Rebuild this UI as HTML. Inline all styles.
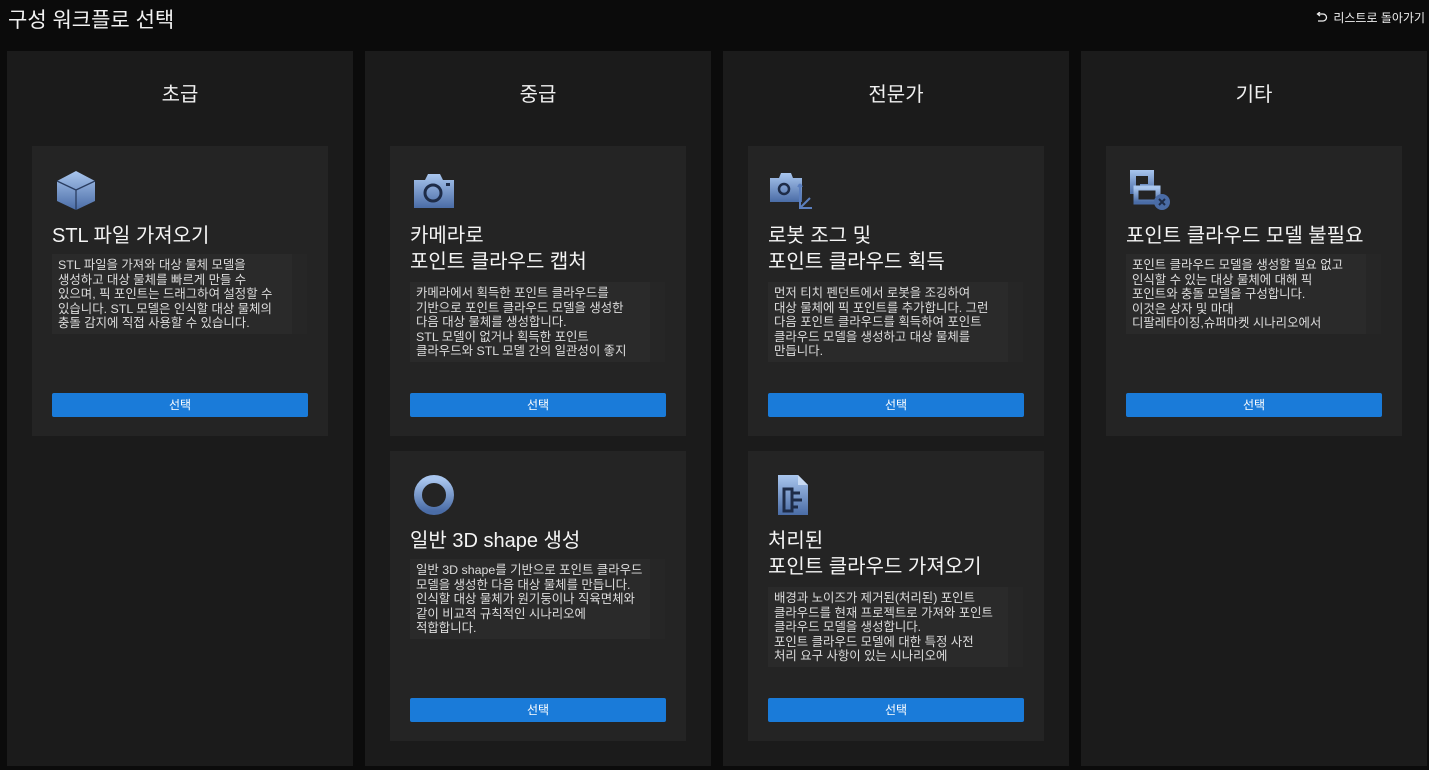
<!DOCTYPE html>
<html><head><meta charset="utf-8"><style>
*{margin:0;padding:0;box-sizing:border-box}
body{width:1429px;height:770px;background:#0b0b0b;font-family:"Liberation Sans","Noto Sans CJK KR",sans-serif;color:#fff;position:relative;overflow:hidden}
.h{position:absolute;left:8px;top:4px;font-size:21px;color:#f2f2f2}
.back{position:absolute;right:4px;top:9px;font-size:12px;color:#eee;display:flex;align-items:center;gap:5px}
.col{position:absolute;top:51px;width:346px;height:715px;background:#1b1b1b}
.ct{position:absolute;top:27px;width:100%;text-align:center;font-size:20px;color:#f0f0f0}
.card{position:absolute;left:25px;width:296px;height:290px;background:#242424}
.ic{position:absolute;left:22px;top:22px;width:44px;height:44px}
.t{position:absolute;left:20px;font-size:20px;line-height:26px;color:#f5f5f5;white-space:nowrap}
.d{position:absolute;left:20px;width:255px;height:80px;background:#2a2a2a;font-size:12.4px;line-height:14.5px;color:#ddd;padding:4px 18px 0 6px;overflow:hidden;white-space:nowrap}
.d::after{content:"";position:absolute;right:0;top:0;width:15px;height:100%;background:#262626}
.b{position:absolute;left:20px;top:247px;width:256px;height:24px;background:#1a7bd9;border-radius:2px;font-size:12px;text-align:center;line-height:24px;color:#fff}
</style></head><body>
<div class="h">구성 워크플로 선택</div>
<div class="back"><svg width="13" height="12" viewBox="0 0 13 12"><path d="M3 2H8a3.5 3.5 0 0 1 0 7H3" fill="none" stroke="#eee" stroke-width="1.3"/><path d="M5 0L2.5 2 5 4" fill="none" stroke="#eee" stroke-width="1.3"/></svg>리스트로 돌아가기</div>
<svg width="0" height="0"><defs><linearGradient id="g" x1="0" y1="0" x2="0" y2="1"><stop offset="0" stop-color="#a9c6ee"/><stop offset="1" stop-color="#4a6ca6"/></linearGradient></defs></svg>

<div class="col" style="left:7px"><div class="ct">초급</div>
<div class="card" style="top:95px">
<svg class="ic" viewBox="0 0 44 44"><path d="M22 3L41 13V33L22 42L3 33V13Z" fill="url(#g)"/><path d="M3 13L22 22L41 13M22 22V42" stroke="#2a3d60" stroke-width="1.3" fill="none"/></svg>
<div class="t" style="top:77px">STL 파일 가져오기</div>
<div class="d" style="top:108px">STL 파일을 가져와 대상 물체 모델을<br>생성하고 대상 물체를 빠르게 만들 수<br>있으며, 픽 포인트는 드래그하여 설정할 수<br>있습니다. STL 모델은 인식할 대상 물체의<br>충돌 감지에 직접 사용할 수 있습니다.</div>
<div class="b">선택</div></div></div>

<div class="col" style="left:365px"><div class="ct">중급</div>
<div class="card" style="top:95px">
<svg class="ic" viewBox="0 0 44 44"><path d="M2 12H13L16 6H28L31 12H42V40H2Z" fill="url(#g)"/><circle cx="21" cy="25" r="8" fill="none" stroke="#1e2c48" stroke-width="3"/><rect x="34" y="15" width="4" height="3" fill="#1e2c48"/></svg>
<div class="t" style="top:77px">카메라로<br>포인트 클라우드 캡처</div>
<div class="d" style="top:136px">카메라에서 획득한 포인트 클라우드를<br>기반으로 포인트 클라우드 모델을 생성한<br>다음 대상 물체를 생성합니다.<br>STL 모델이 없거나 획득한 포인트<br>클라우드와 STL 모델 간의 일관성이 좋지</div>
<div class="b">선택</div></div>
<div class="card" style="top:400px">
<svg class="ic" viewBox="0 0 44 44"><circle cx="22" cy="22" r="16" fill="none" stroke="url(#g)" stroke-width="8"/></svg>
<div class="t" style="top:77px">일반 3D shape 생성</div>
<div class="d" style="top:108px">일반 3D shape를 기반으로 포인트 클라우드<br>모델을 생성한 다음 대상 물체를 만듭니다.<br>인식할 대상 물체가 원기둥이나 직육면체와<br>같이 비교적 규칙적인 시나리오에<br>적합합니다.</div>
<div class="b">선택</div></div></div>

<div class="col" style="left:723px"><div class="ct">전문가</div>
<div class="card" style="top:95px">
<svg class="ic" viewBox="0 0 44 44"><path d="M0 10H9L11 5H21L23 10H32V34H0Z" fill="url(#g)"/><circle cx="14" cy="21" r="5" fill="none" stroke="#1e2c48" stroke-width="2.5"/><path d="M30 16V40H42M30 40L40 30M30 16l-2 3M30 16l2 3" stroke="#5b7fbf" stroke-width="2" fill="none"/></svg>
<div class="t" style="top:77px">로봇 조그 및<br>포인트 클라우드 획득</div>
<div class="d" style="top:136px">먼저 티치 펜던트에서 로봇을 조깅하여<br>대상 물체에 픽 포인트를 추가합니다. 그런<br>다음 포인트 클라우드를 획득하여 포인트<br>클라우드 모델을 생성하고 대상 물체를<br>만듭니다.</div>
<div class="b">선택</div></div>
<div class="card" style="top:400px">
<svg class="ic" viewBox="0 0 44 44"><path d="M8 2H28L38 12V42H8Z" fill="url(#g)"/><path d="M28 2V12H38" fill="#c8daf3"/><path d="M14 16H22V38H14ZM22 20H30M22 27H32M22 34H28" stroke="#1e2c48" stroke-width="3" fill="none"/></svg>
<div class="t" style="top:77px">처리된<br>포인트 클라우드 가져오기</div>
<div class="d" style="top:136px">배경과 노이즈가 제거된(처리된) 포인트<br>클라우드를 현재 프로젝트로 가져와 포인트<br>클라우드 모델을 생성합니다.<br>포인트 클라우드 모델에 대한 특정 사전<br>처리 요구 사항이 있는 시나리오에</div>
<div class="b">선택</div></div></div>

<div class="col" style="left:1081px"><div class="ct">기타</div>
<div class="card" style="top:95px">
<svg class="ic" viewBox="0 0 44 44"><path d="M2 2H26V22H12V16H20V8H8V26H2Z" fill="url(#g)"/><path d="M8 20H30V34H8Z" fill="none" stroke="url(#g)" stroke-width="5"/><circle cx="34" cy="34" r="8" fill="#4a6ca6"/><path d="M31 31l6 6M37 31l-6 6" stroke="#1e2c48" stroke-width="2"/></svg>
<div class="t" style="top:77px">포인트 클라우드 모델 불필요</div>
<div class="d" style="top:108px">포인트 클라우드 모델을 생성할 필요 없고<br>인식할 수 있는 대상 물체에 대해 픽<br>포인트와 충돌 모델을 구성합니다.<br>이것은 상자 및 마대<br>디팔레타이징,슈퍼마켓 시나리오에서</div>
<div class="b">선택</div></div></div>
</body></html>
